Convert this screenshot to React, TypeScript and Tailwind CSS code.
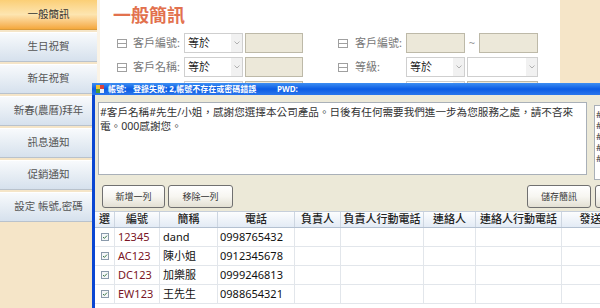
import React from "react"

const menu = ["一般簡訊", "生日祝賀", "新年祝賀", "新春(農曆)拜年", "訊息通知", "促銷通知", "設定 帳號,密碼"]

const columns = [
  "選",
  "編號",
  "簡稱",
  "電話",
  "負責人",
  "負責人行動電話",
  "連絡人",
  "連絡人行動電話",
  "發送結果",
]

const rows = [
  ["12345", "dand", "0998765432"],
  ["AC123", "陳小姐", "0912345678"],
  ["DC123", "加樂服", "0999246813"],
  ["EW123", "王先生", "0988654321"],
]

const gridCols = "grid grid-cols-[20px_45px_58px_77px_46px_83px_52px_86px_80px]"

function FieldIcon() {
  return (
    <svg width="10" height="9" viewBox="0 0 10 9" className="shrink-0">
      <rect x="0.5" y="0.5" width="9" height="8" fill="white" stroke="#a0a0a0" />
      <line x1="1" y1="4.5" x2="9" y2="4.5" stroke="#a0a0a0" />
    </svg>
  )
}

function Select({ value, w }: { value: string; w: string }) {
  return (
    <div className={`${w} h-5 shrink-0 flex border border-[#cfcfcf] bg-white`}>
      <div className="flex-1 pl-[3px] text-[11px] leading-[18px] text-[#222]">{value}</div>
      <div className="w-[11px] bg-[#f1f1f1] flex items-center justify-center">
        <svg width="6" height="4" viewBox="0 0 6 4">
          <path d="M0.5 0.5 L3 3 L5.5 0.5" fill="none" stroke="#b0b0b0" />
        </svg>
      </div>
    </div>
  )
}

function Input({ w }: { w: string }) {
  return <div className={`${w} h-5 shrink-0 border border-[#bdb9a8] bg-[#ece8d9]`} />
}

function XpButton({ label, w }: { label: string; w: string }) {
  return (
    <div
      className={`${w} h-[23px] shrink-0 rounded-[3px] border border-[#707070] bg-gradient-to-b from-white via-[#f7f6f1] to-[#e3e0d3] flex items-center justify-center text-[9px] text-[#333]`}
    >
      {label}
    </div>
  )
}

function Check() {
  return (
    <svg width="8" height="8" viewBox="0 0 8 8">
      <rect x="0.5" y="0.5" width="7" height="7" fill="#f4f6f8" stroke="#8a9aab" />
      <path d="M2 4 L3.4 5.4 L6 2.6" fill="none" stroke="#3d7a4a" strokeWidth="1" />
    </svg>
  )
}

export default function App() {
  return (
    <div className="relative w-[600px] h-[308px] overflow-hidden flex bg-[#f5e5c8] [font-family:'Noto_Sans','Noto_Sans_CJK_TC',sans-serif]">
      {/* side menu */}
      <div className="w-[97px] shrink-0 flex flex-col gap-[2px]">
        {menu.map((m, i) => (
          <div
            key={m}
            className={
              i === 0
                ? "h-[30px] flex items-center justify-center text-[10.5px] text-[#333] bg-gradient-to-b from-[#fbcf76] via-[#fde5b0] to-[#f4a83a] border-b border-[#d99a3a]"
                : "h-[30px] flex items-center justify-center text-[10.5px] text-[#555] bg-gradient-to-b from-[#f8fafc] to-[#d6e1ed] border-t border-white border-b border-b-[#b9c2cc]"
            }
          >
            {m}
          </div>
        ))}
      </div>
      <div className="w-[3px] shrink-0 bg-[#faf3e6]" />

      {/* main panel */}
      <div className="w-[460px] shrink-0 bg-white pt-[4px]">
        <div className="pl-[13px] text-[18px] leading-[22px] font-bold text-[#e2714e]">一般簡訊</div>
        <div className="mt-[7px] pl-[17px] flex flex-col gap-1">
          <div className="h-5 flex items-center">
            <div className="w-[221px] shrink-0 flex items-center">
              <FieldIcon />
              <div className="ml-[6px] w-[51px] text-[11px] text-[#777]">客戶編號:</div>
              <Select value="等於" w="w-[59px]" />
              <div className="ml-[2px]">
                <Input w="w-[58px]" />
              </div>
            </div>
            <div className="flex items-center">
              <FieldIcon />
              <div className="ml-[7px] w-[51px] text-[11px] text-[#777]">客戶編號:</div>
              <Input w="w-[59px]" />
              <div className="w-[14px] text-center text-[11px] text-[#999]">~</div>
              <Input w="w-[59px]" />
            </div>
          </div>
          <div className="h-5 flex items-center">
            <div className="w-[221px] shrink-0 flex items-center">
              <FieldIcon />
              <div className="ml-[6px] w-[51px] text-[11px] text-[#777]">客戶名稱:</div>
              <Select value="等於" w="w-[59px]" />
              <div className="ml-[2px]">
                <Input w="w-[58px]" />
              </div>
            </div>
            <div className="flex items-center">
              <FieldIcon />
              <div className="ml-[7px] w-[51px] text-[11px] text-[#777]">等級:</div>
              <Select value="等於" w="w-[59px]" />
              <div className="ml-[2px]">
                <Select value="" w="w-[71px]" />
              </div>
            </div>
          </div>
          {/* third row, mostly under the window */}
          <div className="h-5 flex items-center">
            <div className="w-[221px] shrink-0 flex items-center">
              <div className="w-[67px]" />
              <Select value="" w="w-[59px]" />
              <div className="ml-[2px]">
                <Input w="w-[58px]" />
              </div>
            </div>
            <div className="flex items-center">
              <div className="w-[68px]" />
              <Select value="" w="w-[59px]" />
              <div className="ml-[2px]">
                <Input w="w-[71px]" />
              </div>
            </div>
          </div>
        </div>
      </div>

      {/* message window */}
      <div className="absolute left-[92px] top-[83px] w-[600px] h-[240px] flex flex-col">
        <div className="h-[17px] flex items-center pl-[4px] bg-gradient-to-b from-[#3d8ef2] via-[#0a5ce4] to-[#2a76ec] text-white text-[8px] font-bold">
          <svg width="8" height="8" viewBox="0 0 8 8" className="shrink-0">
            <rect x="0" y="0" width="4" height="4" fill="#f2c230" />
            <rect x="4" y="0" width="4" height="4" fill="#d9433b" />
            <rect x="0" y="4" width="4" height="4" fill="#4a9a3e" />
            <rect x="4" y="4" width="4" height="4" fill="#e8eef8" />
          </svg>
          <span className="ml-[4px] w-[25px] shrink-0">帳號:</span>
          <span className="w-[144px] shrink-0 whitespace-nowrap">登錄失敗: 2,帳號不存在或密碼錯誤</span>
          <span>PWD:</span>
        </div>
        <div className="flex-1 bg-[#ece9d8] border-l-[3px] border-[#0a46d2]">
          <div className="mt-[7px] flex">
            <div className="ml-[3px] w-[489px] h-[73px] shrink-0 border border-[#a9b0b8] bg-white pl-[1px] pt-[2px] text-[10.6px] leading-[14px] text-[#333] whitespace-nowrap overflow-hidden">
              #客戶名稱#先生/小姐，感謝您選擇本公司產品。日後有任何需要我們進一步為您服務之處，請不吝來
              <br />
              電。000感謝您。
            </div>
            <div className="ml-[7px] mt-[3px] w-[40px] h-[75px] shrink-0 border border-[#a9b0b8] bg-white pl-[1px] pt-[3px] text-[9px] leading-[11px] text-[#333]">
              <div>#</div>
              <div>#</div>
              <div>#</div>
              <div>#</div>
              <div>#</div>
            </div>
          </div>
          <div className="mt-[5px] flex">
            <div className="ml-[7px]">
              <XpButton label="新增一列" w="w-[63px]" />
            </div>
            <div className="ml-[3px]">
              <XpButton label="移除一列" w="w-[65px]" />
            </div>
            <div className="ml-[294px]">
              <XpButton label="儲存簡訊" w="w-[64px]" />
            </div>
            <div className="ml-[4px]">
              <XpButton label="" w="w-[40px]" />
            </div>
          </div>

          <div className="mt-[3px] bg-white">
            <div className={`${gridCols} h-[17px] bg-gradient-to-b from-[#fcfdfe] to-[#e3ebf5] border-t border-[#c6cfdb] border-b border-b-[#b4c1d1]`}>
              {columns.map((c) => (
                <div
                  key={c}
                  className="border-r border-[#cdd6e1] flex items-center justify-center text-[11px] font-medium text-[#222] whitespace-nowrap overflow-hidden"
                >
                  {c}
                </div>
              ))}
            </div>
            {rows.map((r) => (
              <div key={r[0]} className={`${gridCols} h-[19px] border-b border-[#e2e6eb]`}>
                <div className="border-r border-[#e2e6eb] flex items-center justify-center">
                  <Check />
                </div>
                <div className="border-r border-[#e2e6eb] pl-[3px] text-[11px] leading-[18px] text-[#7a1424]">{r[0]}</div>
                <div className="border-r border-[#e2e6eb] pl-[3px] text-[11px] leading-[18px] text-[#111]">{r[1]}</div>
                <div className="border-r border-[#e2e6eb] pl-[2px] text-[11px] leading-[18px] text-[#111]">{r[2]}</div>
                <div className="border-r border-[#e2e6eb]" />
                <div className="border-r border-[#e2e6eb]" />
                <div className="border-r border-[#e2e6eb]" />
                <div className="border-r border-[#e2e6eb]" />
                <div className="border-r border-[#e2e6eb]" />
              </div>
            ))}
            <div className="h-[20px]" />
          </div>
        </div>
      </div>
    </div>
  )
}
